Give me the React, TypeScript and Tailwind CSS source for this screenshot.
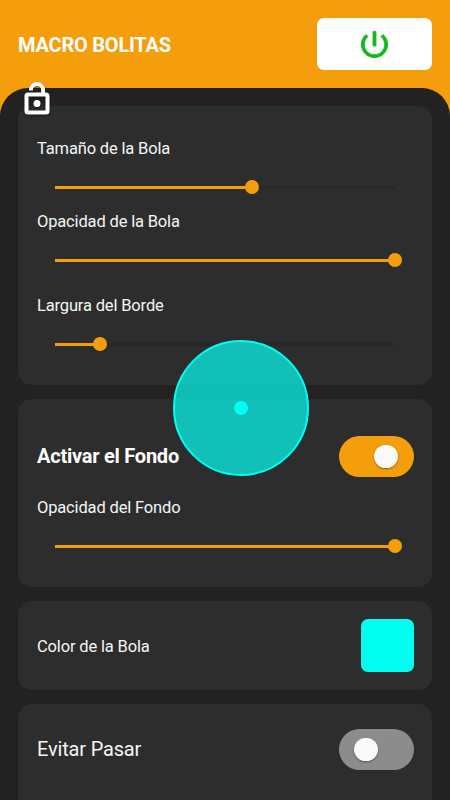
import React from 'react';

const PowerIcon: React.FC = () => (
  <svg viewBox="0 0 24 24" fill="currentColor" stroke="currentColor" className="w-[35px] h-[35px] stroke-[0.6] text-[#10b91a]">
    <path d="M13 3h-2v10h2V3zm4.83 2.17-1.42 1.42C17.99 7.86 19 9.81 19 12c0 3.87-3.13 7-7 7s-7-3.13-7-7c0-2.19 1.01-4.14 2.58-5.42L6.17 5.17C4.23 6.82 3 9.26 3 12c0 4.97 4.03 9 9 9s9-4.03 9-9c0-2.74-1.23-5.18-3.17-6.83z" />
  </svg>
);

const LockIcon: React.FC = () => (
  <svg viewBox="0 0 24 24" fill="currentColor" stroke="currentColor" className="w-[36px] h-[36px] stroke-[0.7] text-white">
    <path d="M12 17c1.1 0 2-.9 2-2s-.9-2-2-2-2 .9-2 2 .9 2 2 2zm6-9h-1V6c0-2.76-2.24-5-5-5S7 3.24 7 6h1.9c0-1.71 1.39-3.1 3.1-3.1 1.71 0 3.1 1.39 3.1 3.1v2H6c-1.1 0-2 .9-2 2v10c0 1.1.9 2 2 2h12c1.1 0 2-.9 2-2V10c0-1.1-.9-2-2-2zm0 12H6V10h12v10z" />
  </svg>
);

const Slider: React.FC<{ value: number }> = ({ value }) => (
  <div className="relative ml-[18px] w-[340px] h-[15px] flex items-center">
    <div className="flex items-center w-full h-[3px] bg-[#282828]">
      <div className="h-[3px] bg-[#f59e0b]" style={{ width: `${value}%` }} />
    </div>
    {/* Thumb */}
    <div
      className="absolute top-0 -ml-[7px] w-[14px] h-[14px] rounded-full bg-[#f59e0b]"
      style={{ left: `${value}%` }}
    />
  </div>
);

const Toggle: React.FC<{ on: boolean }> = ({ on }) => (
  <button
    className={`flex items-center w-[75px] h-[41px] rounded-full ${
      on ? 'bg-[#f59e0b] pl-[35px]' : 'bg-[#8c8c8c] pl-[15px]'
    }`}
  >
    <span className="w-[23.5px] h-[23.5px] rounded-full bg-[#fafafa] shadow-[0_1px_2px_rgba(0,0,0,0.4)]" />
  </button>
);

const Label: React.FC<{ children: React.ReactNode }> = ({ children }) => (
  <p className="text-[16.5px] leading-5 tracking-[-0.16px] text-[#f5f5f5]">{children}</p>
);

export default function App() {
  return (
    <div className="relative w-[450px] h-[800px] overflow-hidden bg-[#f59e0b] font-['Roboto',sans-serif]">
      <header className="flex items-center justify-between h-[88px] px-[18px]">
        <h1 className="pt-px text-[20px] font-bold tracking-[-0.22px] text-white">MACRO BOLITAS</h1>
        <button className="flex items-center justify-center w-[115px] h-[52px] rounded-[7px] bg-white">
          <PowerIcon />
        </button>
      </header>

      <main className="flex flex-col gap-[14px] h-[712px] px-[18px] pt-[18px] rounded-t-[28px] bg-[#222222]">
        <section className="h-[279px] shrink-0 rounded-[14px] bg-[#2d2d2d] pl-[19px] pt-[33px]">
          <Label>Tamaño de la Bola</Label>
          <div className="pt-[21px]">
            <Slider value={57.9} />
          </div>
          <div className="pt-[17px]">
            <Label>Opacidad de la Bola</Label>
          </div>
          <div className="pt-[21px]">
            <Slider value={100} />
          </div>
          <div className="pt-[28px]">
            <Label>Largura del Borde</Label>
          </div>
          <div className="pt-[21px]">
            <Slider value={13.3} />
          </div>
        </section>

        <section className="h-[188px] shrink-0 rounded-[14px] bg-[#2d2d2d] pl-[19px] pt-[37px]">
          <div className="flex items-center justify-between pr-[18px]">
            <h2 className="pb-[2px] text-[20px] font-bold tracking-[-0.24px] text-white">Activar el Fondo</h2>
            <Toggle on={true} />
          </div>
          <div className="pt-[21px]">
            <Label>Opacidad del Fondo</Label>
          </div>
          <div className="pt-[21px]">
            <Slider value={100} />
          </div>
        </section>

        <section className="flex items-center justify-between h-[89px] shrink-0 rounded-[14px] bg-[#2d2d2d] pl-[19px] pr-[18px]">
          <div className="pt-[2px]">
            <Label>Color de la Bola</Label>
          </div>
          <div className="w-[53px] h-[53px] rounded-[7px] bg-[#00fff0]" />
        </section>

        <section className="h-[120px] shrink-0 rounded-[14px] bg-[#2d2d2d] pl-[19px] pr-[18px] pt-[25px]">
          <div className="flex items-center justify-between">
            <p className="pb-[2px] text-[20px] tracking-[-0.17px] text-[#f5f5f5]">Evitar Pasar</p>
            <Toggle on={false} />
          </div>
        </section>
      </main>

      {/* Floating lock */}
      <div className="absolute left-[19px] top-[80.5px] drop-shadow-[0_1px_1px_rgba(0,0,0,0.6)]">
        <LockIcon />
      </div>

      {/* Floating ball */}
      <div className="absolute left-[173px] top-[340px] flex items-center justify-center w-[136px] h-[136px] rounded-full border-2 border-[#00fff0] bg-[#05fff4]/70">
        <div className="w-[14px] h-[14px] rounded-full bg-[#00fff0]" />
      </div>
    </div>
  );
}
